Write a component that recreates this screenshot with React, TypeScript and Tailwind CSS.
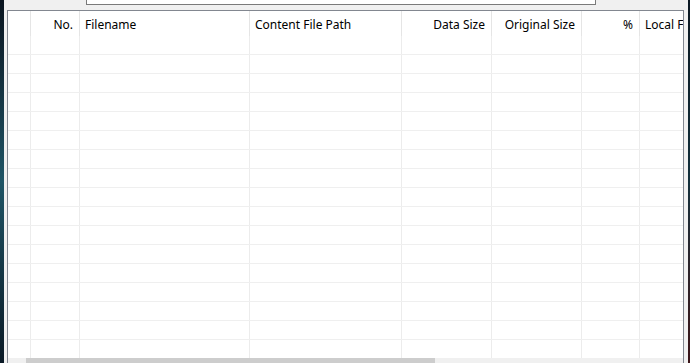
import React from "react";

const columns = [
  { key: "rh", label: "", width: 23, align: "left" },
  { key: "no", label: "No.", width: 49, align: "right" },
  { key: "file", label: "Filename", width: 170, align: "left" },
  { key: "path", label: "Content File Path", width: 152, align: "left" },
  { key: "data", label: "Data Size", width: 90, align: "right" },
  { key: "orig", label: "Original Size", width: 90, align: "right" },
  { key: "pct", label: "%", width: 58, align: "right" },
  { key: "local", label: "Local File Path", width: 120, align: "left" },
];

const rows = Array.from({ length: 17 }, (_, i) => i);

const App = () => {
  return (
    <div
      className="w-[690px] h-[363px] overflow-hidden flex bg-[#0c1824]"
      style={{ fontFamily: '"Segoe UI", "Noto Sans", sans-serif' }}
    >
      {/* desktop peeking through on the left */}
      <div className="w-[4px] h-full shrink-0 bg-gradient-to-b from-[#0a1520] via-[#1f5566] to-[#0a1a26]" />

      {/* dialog body */}
      <div className="w-[684px] h-[375px] shrink-0 bg-[#f0f0f0] flex flex-col">
        <div className="h-[10px] shrink-0">
          <div className="ml-[82px] w-[510px] h-[5px] bg-white border-x border-b border-[#7a7a7a]" />
        </div>

        <div className="ml-[3px] w-[677px] h-[365px] shrink-0 border-l border-t border-r border-[#828790] bg-white flex flex-col overflow-hidden">
          {/* header */}
          <div className="h-[25px] shrink-0 flex">
            {columns.map((c) => (
              <div
                key={c.key}
                className={`shrink-0 h-full flex items-center pt-[3px] border-r border-[#e5e5e5] text-[12px] text-black whitespace-nowrap overflow-hidden ${
                  c.align === "right" ? "justify-end pr-[6px]" : "justify-start pl-[5px]"
                }`}
                style={{ width: c.width }}
              >
                {c.label}
              </div>
            ))}
          </div>

          {/* empty rows */}
          <div className="h-[322px] shrink-0 overflow-hidden">
            {rows.map((r) => (
              <div key={r} className="h-[19px] flex border-b border-[#efefef]">
                {columns.map((c) => (
                  <div
                    key={c.key}
                    className="shrink-0 h-full border-r border-[#ececec]"
                    style={{ width: c.width }}
                  />
                ))}
              </div>
            ))}
          </div>

          {/* horizontal scrollbar */}
          <div className="h-[17px] shrink-0 flex bg-[#f0f0f0]">
            <div className="w-[18px] h-full shrink-0" />
            <div className="w-[409px] h-full shrink-0 bg-[#cdcdcd]" />
          </div>
        </div>
      </div>

      {/* desktop on the right */}
      <div className="flex-1 h-full bg-gradient-to-b from-[#0b1822] via-[#12303c] to-[#3a1418]" />
    </div>
  );
};

export default App;
